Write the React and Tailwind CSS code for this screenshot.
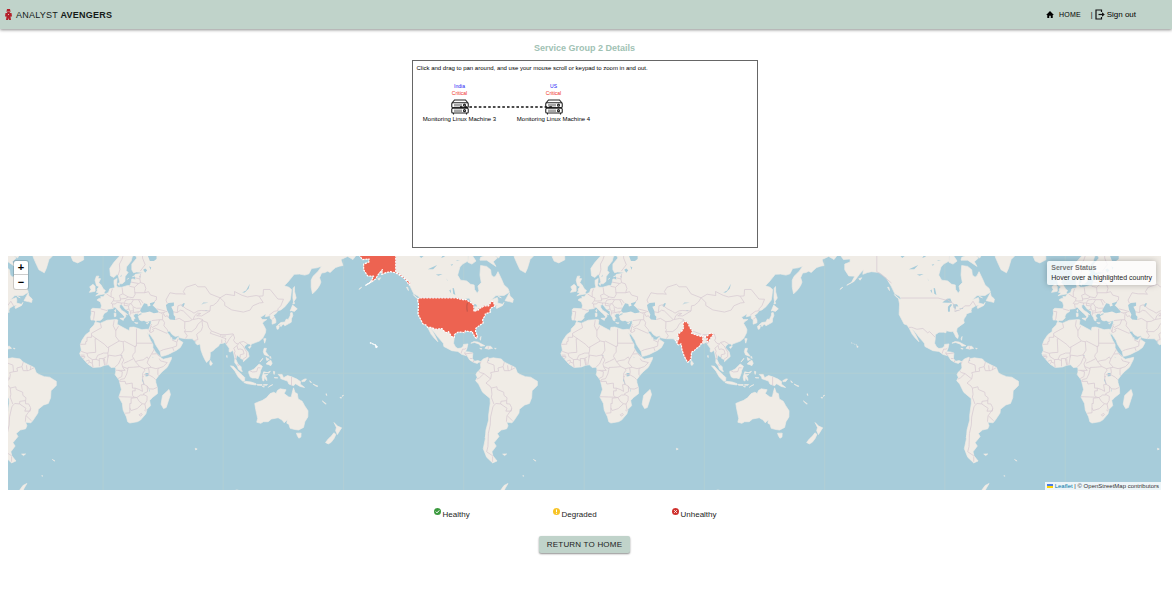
import React from "react";

const WORLD = 1442;
const DEG = WORLD / 360;

// Web Mercator projection of "lon,lat lon,lat ..." lists to an SVG path.
function toPath(list, close) {
  const points = list
    .trim()
    .split(/\s+/)
    .map((pair) => {
      const [lon, lat] = pair.split(",").map(Number);
      const x = 312 + lon * DEG;
      const y =
        370 -
        (WORLD / (2 * Math.PI)) *
          Math.log(Math.tan(Math.PI / 4 + (lat * Math.PI) / 360));
      return `${x.toFixed(1)} ${y.toFixed(1)}`;
    });
  return `M${points.join("L")}${close ? "Z" : ""}`;
}

const areas = (lists) => lists.map((l) => toPath(l, true)).join("");
const lines = (lists) => lists.map((l) => toPath(l, false)).join("");

const OLD_WORLD = [
  "14,68 180,68.5 190,66.2 187,64.5 183,65.5 178,64.5 179.5,62.5 177,62.3 174,61.8 172,61 170,60 168,60.5 166,60 163.5,59.8 162,58 163,56.2 162,54.8 160,53 158.3,52 156.7,51 155.7,54 155.7,57 157,58.5 161,60.5 163.5,62.3 160,61.7 156,61.5 154,59.5 151,59 147,59.4 143,59.3 138,56 135.5,54.7 139,54 141,53 140.5,50 140,48 136,44.5 133,42.8 130.7,42.3 129.7,41 127.5,39.8 129.3,37 129.3,35.3 126.5,34.5 126.5,37.2 125,38 125,39.6 121.3,38.9 122,40.7 119,39.2 117.7,38.8 119,37.3 122.5,37.3 120,36 119.3,35 121,32.5 121.8,31 121.5,29 119.5,25.5 117,23.5 114,22.4 111,21.4 110.5,20.3 109.8,21.5 108,21.6 106,20 105.7,18.8 108.5,15.8 109.3,12.5 107,10.5 105,8.7 105,10.2 103,11 102,12.5 101,12.7 100.6,13.5 100,13 99.3,10.5 100.2,8.5 101,6.8 103.3,5 103.4,3 104.2,1.4 103.3,1.5 101.3,3 100.4,5.5 98.5,8 98.6,11 97.7,15 97,17 95.4,15.8 94.3,16 94.4,18.5 92.3,21 91.5,22.7 90,22 88,21.7 87,21.3 86.5,20 84,18.3 82.3,16.7 80.2,15.5 80.2,13 79.8,10.3 78.2,8.8 77.5,8.1 76.3,10 74.8,13 73.3,17 72.8,20 72.5,21.5 70.5,20.8 69,22.3 70,23 68,23.8 66.8,25 61.5,25.1 57.3,25.7 56.5,27 54,26.6 51.5,28 50,30 48,30 48,29.3 50,27 50.7,25 51.3,26 51.6,25 51.5,24.3 54,24.2 56.3,26.2 56.6,24.4 59.8,22.5 57.8,19 55,17 52,15.6 48.7,14 45,12.8 43.4,12.7 42.7,16 39.2,21 38,24 35,28 34.9,29.5 34.3,27.8 32.6,29.9 32.3,31.2 34.3,31.3 35,33 35.9,35 36,36.8 34,36.3 32.5,36 30.6,36.8 29,36.5 27.3,37 26.3,39.3 29,40.4 29,41.1 28,41 26.2,40.2 26,40.8 24,40.7 23.5,40.2 22.7,40.4 23,39 24,38 23,37.8 23,36.5 21.7,36.9 21.2,38.3 19.4,40.5 19.5,42 16.5,43.3 14.5,45.2 13.5,45.7 12.3,45.3 12.5,44 14,42.5 16,41.7 18.4,40.1 17,40.5 17,39 15.7,37.9 16,39 14.3,40.6 12.3,41.8 10.3,43.3 8.8,44.4 7.3,43.6 5,43.3 3.2,43.2 3.2,41.9 0.8,40.8 -0.3,39.3 0,38.6 -0.8,37.6 -2.2,36.7 -4.5,36.7 -5.5,36 -6.5,37 -9,37 -9.3,38.7 -8.8,41 -9,43 -7.8,43.7 -1.8,43.4 -1.2,45 -2,47 -4.6,48 -3,48.8 -1.5,48.7 -1.8,49.7 0.2,49.6 1.7,51 4,51.6 5,53.3 8,53.7 8.8,54 8.2,55.5 8.2,57 10.5,57.7 10.3,56.5 10,54.8 11,54 14,54 18.5,54.8 20,54.7 21,56 21.5,57.5 22.7,57.5 24,57.1 24.3,58 23.5,58.7 24,59.3 28,59.6 30,60 25,60.2 22.8,59.9 21.5,61 21.5,63 25.3,65 24,65.9 22,65.6 21,64 17.5,62 17.3,60.7 18.7,60 16.5,58.5 16.3,56.5 14.3,55.5 12.8,55.5 11.3,58.9 10.5,59.3 8,58.1 5.5,58.8 5,61.5 8,63.5 12,65.5",
  "-5.9,35.8 -2,35.1 3,36.9 10,37.3 11,37 10.5,34.5 15,32.4 19.5,30.4 20,32.5 23,32.7 29,31 32.3,31.3 32.6,29.9 35.5,24 37.3,21 37.3,18.7 39.5,15.3 43.2,12 43.3,11.5 45,10.5 51.2,11.9 51,10.4 48,4.5 44,1 41.5,-1.8 39.3,-4.8 39.5,-7 40.6,-10.8 40.7,-15 37,-17.7 34.8,-20 35.5,-23.5 32.8,-26 32,-29 28,-33 25.7,-34 20,-34.8 18.4,-34 17.5,-31 15,-26.5 14.4,-22 11.8,-17.5 13.7,-12 13,-9 12,-5 9,-1 9.5,1 9.5,4 8.5,4.6 6,4.3 4,6.4 1,6 -2,4.8 -7.5,4.4 -11.5,7 -13.3,9 -15,11 -16.8,13 -17.5,14.7 -16.3,17 -17,21 -15.8,24 -13,27.8 -9.8,29.8 -9.7,31.5 -6.8,34",
  "113.5,-22 114.2,-26 115.7,-32 115,-34.3 118,-35 120,-34 123.5,-34 126,-32.3 131,-31.5 134,-33 135.5,-34.7 137.8,-32.8 137.5,-35 139,-35.5 140,-38 143.5,-38.7 146.3,-39 150,-37.5 151,-34 153.2,-31 153.3,-27 150.8,-23.5 149,-20.5 146,-18.8 145.3,-15 143.7,-14.3 142.5,-10.8 141.6,-14 140.8,-17.5 139,-17.5 135.5,-15 136.9,-12.2 132.5,-11.5 130.5,-12.7 129.5,-15 127.8,-14 125,-15 122.3,-18 119,-20 116.5,-20.8",
  "144.7,-40.8 148.2,-40.8 148,-43 146.5,-43.6 145.4,-42.3",
  "172.8,-34.5 175.4,-36.7 178.5,-37.7 177,-39.5 175.3,-41.6 174,-39.4 174.6,-37.5",
  "172.7,-40.6 174.2,-41.5 172.8,-43.8 170.7,-45.8 168.5,-46.6 166.5,-45.9 168.5,-44 171,-42.3",
  "131,-0.8 134,-0.8 135,-3.3 138,-1.7 141,-2.6 145,-4.3 147.8,-6.2 147.5,-8 150.8,-10.5 147.5,-9.8 144,-7.7 142.6,-9.2 139,-8 138,-5.8 133,-4 132.8,-2.7",
  "148.5,-5.6 151,-4.2 152.2,-4.2 151,-6 149,-6.3",
  "154.6,-5.5 156,-6.8 155,-6.6", "157,-8 160.8,-9.6 159.6,-9.7", "164,-20.2 167,-22.2 166.3,-22.3", "177.3,-17.6 178.6,-18 177.5,-18.2", "178.7,-16.8 180,-16.2 179.5,-16.8", "167,-15 167.5,-16.4 166.8,-15.8",
  "109,1.5 110,1.7 113,3.2 116.8,7 119.2,5.2 117.8,2 117.5,0 116,-4 114,-3.5 111.7,-3.5 110.2,-2.8 109,0.2",
  "95.3,5.6 97.5,5.2 100.5,2 103.8,-1 106,-3.2 105.8,-5.9 104.3,-5.8 101,-2.6 98.7,1.6",
  "105.3,-6.8 106.5,-6 110.8,-6.5 114.4,-7.7 114.3,-8.7 108,-7.8",
  "115,-8.2 116.7,-8.3 119,-8.3 118.8,-9 115.5,-8.9", "120,-8.4 123,-8.3 122.5,-8.9 120,-8.9", "124,-10 127,-8.4 125,-9.3 123.6,-10.4", "119,-9.5 120.8,-10 120,-10.2",
  "119.5,-5.5 120.4,-5.6 120.5,-3 121.7,-4.7 122.6,-5.4 122.3,-3.3 121.4,-1.9 123.3,-0.9 120.2,-0.9 120.3,0.4 123,0.6 125.2,1.6 124,0.2 120.2,1.2 119,-2.8",
  "127.5,1.5 128.5,1.2 128,-0.8 127.6,0.2", "128,-3.1 130.8,-3.4 128.5,-3.5",
  "120.5,18.4 122.2,18.4 121.6,15.9 124,13 123.8,12.7 120.7,13.8 119.9,16", "125.4,12.4 125.6,11 124.4,12.3", "122,11.8 123.2,11 123.5,10 122.5,9.5", "123.9,11 124,9.8", "122,7 123.5,8.6 125.5,9.8 126.5,7.5 125.5,5.7 124,6.5",
  "117.3,8.4 119.5,11.2 119,10.2", "120.2,25.1 121.9,25.1 120.9,22", "108.7,19.4 110.8,20 109.6,18.3",
  "129.7,33.2 131,33.9 131.9,33 131.2,31.4 130.2,31.3", "132.2,33.6 134.3,34.3 133.3,33",
  "130.9,34 133,35.5 136,35.8 137,37.5 138.6,37.4 140,39.5 140.3,41.2 141.5,41.3 142,39.6 141,37.8 140.8,35.7 138.7,34.7 136,33.5 135,34.4",
  "140,42.2 141.8,45.4 145.3,43.4 143.2,42 141,42.4", "142,46 142.5,47 142,49 142.2,53.5 143.2,54.3 143.3,52 144.5,49 142.8,47.3 143.3,46.2",
  "79.8,7.5 80.2,9.6 81.8,7.4 81,6.1 80.1,6.1", "44.5,-16.3 49.3,-12 50.4,-15.6 47.2,-24.8 45.2,-25.5 43.4,-22.5",
  "-5.5,50.1 -3.5,50.4 1.3,51 0.8,51.5 1.7,52.6 0.2,53.2 -1.5,55 -3.2,56 -1.9,57.6 -4,57.7 -3.1,58.6 -5,58.6 -6,57 -5,54.8 -3,54.2 -4.5,53.2 -4.2,52.3 -5.2,51.8 -3,51.4",
  "-6,52.2 -6,54.4 -7.5,55.3 -10,54.2 -9,53 -10.2,51.7", "-22.5,66.4 -24,65.5 -22.5,64 -19,63.4 -14.5,64.4 -14.6,66.2 -20,66",
  "12.5,38 15.5,38.2 15.1,36.8", "8.3,41 9.6,41 9.6,39.2 8.5,39", "8.6,42.5 9.4,43 9.3,41.6", "23.6,35.5 26.2,35.2 24.8,34.9", "32.4,35 34.4,35.6 33.2,34.7",
  "11,55.6 12.5,56 12,54.8", "18.2,57.3 19.2,57.9", "22,58.4 23.2,58.6", "69,-48.8 70.4,-49.2 69.2,-49.6", "94,-67 97,-65.8 100,-65.4 103,-65.7 106,-66.3 110,-66 112,-67", "92.6,13.4 92.9,11.8 92.5,12",
];

const NEW_WORLD = [
  "-166,68.5 -100,68.5 -86,68.5 -87,66.5 -87,64 -91,63 -93,62 -94.7,59 -92.5,57 -88,56.7 -85,55.3 -82.3,55 -82,53 -80,51.3 -78.8,52.5 -79.5,54.5 -77,56 -78,59 -77.5,62.5 -73,62.2 -70,61 -69.5,59 -67.5,58.2 -66,58.8 -64.5,60.3 -61.5,57 -60,55 -57,53.5 -56,51.8 -60,50.2 -66,50.2 -69.5,48 -65,49.2 -64.5,48 -64.8,46.5 -61,45.8 -60,46.8 -61,45.2 -65.5,43.6 -66,44.5 -64.5,45.5 -67,45 -70,43.7 -70.7,42 -70,41.7 -74,40.6 -74.2,39.5 -75.5,38 -76,37 -75.6,35.2 -78,33.9 -81,32 -81.3,30 -80,27 -80.4,25.2 -81.7,26 -82.8,28 -84,30 -85.3,29.7 -89,30.3 -89.3,29 -91,29.4 -94.5,29.4 -97.2,27.8 -97.3,25 -97.8,22 -96.3,19.3 -94.5,18.2 -92,18.6 -90.5,19.8 -90.3,21.1 -87,21.5 -87.7,18.5 -88.8,16 -86,15.8 -83.3,15 -83.7,11 -82,9 -79.5,9.5 -77.4,8.7 -77.6,7.6 -78.5,8.6 -80,7.4 -82.8,8.2 -85.7,10 -87.6,13 -91.5,14 -94.5,16.2 -99,16.7 -105,19.7 -105.4,22 -109.3,26 -112.8,30 -114.8,31.7 -113,29.3 -111,26 -109.5,23 -112.2,25.5 -114.5,28 -116.7,31.8 -118.4,34 -120.6,34.6 -124.3,40.3 -124,46 -124.7,48.4 -122.7,48.5 -124,49.8 -127.5,51 -130.3,54.5 -134,58 -139,60 -145,60.3 -148,60 -151.5,59.3 -151,61.1 -154,59.3 -158,56.5 -163.5,54.9 -160,56 -157.5,58.6 -162,58.7 -165,61 -165,63 -161,63.7 -161,64.7 -166,64.5 -168,65.7 -163,66.3",
  "-77.4,8.7 -75.5,10.7 -72,12 -71.5,10.9 -68,11.5 -62,10.7 -60,8.5 -55,6 -51.5,4.3 -50,0.5 -48,-0.8 -44,-2.5 -40,-2.9 -37,-4.8 -35,-6 -35,-9 -39,-13 -39.3,-18 -41,-22 -44.5,-23 -48.5,-26 -48.8,-28.5 -52.3,-33 -54,-34.7 -58,-34.3 -57,-36.5 -58,-38.3 -62,-39 -65,-41 -63.7,-42.7 -67.5,-46 -65.8,-47.7 -69,-50.5 -68.3,-52.4 -65.2,-54.7 -68.5,-55.5 -73,-53 -75.5,-49 -74,-44 -73.5,-39 -71.5,-33 -71.5,-30 -70.3,-22 -70.4,-18.5 -76,-14 -79,-8 -81.2,-5.5 -80,-3 -81,-1 -80,1 -78.8,1.8 -77.3,4 -77.6,7.4",
  "-54,67.5 -52,65 -50,63 -48,61 -44,59.9 -42.5,61.5 -40.5,64.5 -37,66 -33,67.5",
  "-74,67.5 -72.5,66 -77.5,65.2 -78,64.3 -73,64.3 -66,62.2 -68,63.8 -65,65 -68,66.2 -64,65 -61.5,66.7 -64,67.8", "-86.5,65.8 -84,66 -81,64 -84,63 -87,63.6",
  "-59.2,47.7 -56,51.5 -55.5,50 -53,48.5 -53.5,46.8 -56,47.2", "-64.3,49.8 -62,49.1", "-128,50.7 -124,48.5 -125.5,49", "-133,54 -131.5,52.5 -132,54",
  "-84.8,22 -82.5,23.1 -79.5,22.8 -74.3,20.2 -77.5,19.9 -78.5,21.3 -82,22.5", "-74.3,18.4 -73,19.9 -70,19.8 -68.5,18.4 -71.5,17.8", "-78.2,18.4 -76.4,18.1 -77.2,17.8", "-67.1,18.4 -65.8,18.3 -66.5,18", "-78,25 -77.2,26.6 -77.6,24",
  "-61,-51.6 -58,-51.5 -59.5,-52.3", "-38,-54 -36,-54.7 -37,-54.5",
  "-64,-67 -62.5,-65.5 -60,-64 -57,-63.3 -59,-64.8 -61.5,-66.8", "-46,-60.6 -45,-60.7", "-154.5,57.6 -152.3,58 -153.5,57", "-168.5,53 -166.5,54 -168,53.5", "-73.5,-42 -74.2,-43.4 -73.6,-43.2",
];

const HAWAII = ["-155.9,20.2 -154.9,19.5 -155.7,19", "-158.2,21.6 -157.8,21.3", "-160,22.2 -159.4,22", "-156.7,21 -156.1,20.7"];

const WATERS = [
  "28,42 27.7,42.6 28.7,44 30.7,46.3 33,46 33.5,44.6 35.5,45 35,46.3 37,46.8 39,47.2 38,46 37,45.3 39,44 41.5,42 41.3,41.3 38,41 35,42 31.5,41.3 29,41.2",
  "47,45.5 49,46.5 53,46.8 53,45 51,44.5 52.7,42 52.8,40 54,39 53.8,37 50,37.4 48.9,38.5 49.5,40.3 47.8,42.7",
  "58.5,45 60,46.3 61.2,46.3 60,44.2", "73.5,45.5 75,46.7 79,46.6 75,46.2", "104,51.6 107,52.5 109.8,55.5 109,53.5 106,51.6", "31.7,0.3 34,0.3 34,-2 31.8,-2.4",
  "29.3,-3.5 31,-8.5 30.3,-8 29,-5", "34,-9.7 35,-14 34.4,-13", "33,67.5 32.5,66.8 35,64 38,64 40,64.7 40,66 44,66 44,67.5", "30,61 31.5,61.5 33,60.8 31.5,59.9", "34.5,62.3 36,61.8 35.5,61", "27,58.8 28,58.6 27.7,57.9",
  "12.8,58.5 14,59.2 13.5,58.4", "28,61.8 29,61.5", "71,67.5 72,66.3 74,66.3 73,67.5", "76,42.6 78.3,42.7 77,42.2", "12.8,13.5 14.5,13.6 14,12.7", "37,12.3 37.7,12 37.2,11.6",
  "-92,46.7 -88.5,48.6 -86,48.7 -84.7,46.6 -88,46.6", "-87.8,42.5 -87.8,44.5 -86,45.9 -84.5,45.7 -86.3,44 -86.3,42 -87.4,41.7", "-84,45.9 -81,45.9 -80,44.7 -81.6,44.8 -82,43.2 -83.5,44", "-83.3,41.7 -79,42.7 -81,42.6", "-79.5,43.5 -76.4,44 -76.5,43.5 -79,43.3",
  "-98.5,53.7 -98,51 -96.4,50.5 -97.5,53.6", "-101,52.5 -99.5,51.2 -100,53", "-111,59.2 -106,59.4 -109,58.8", "-117,61.2 -110,62.7 -113,61.2", "-103,57.8 -102,56.4 -102.6,57", "-125,66.5 -119,66 -122,65", "-100,62.8 -98,63 -99,62.4", "-96,64.2 -93,64.3 -95,64", "-107,65 -104,65.5 -106,65.7", "-75.5,60 -74,60.2", "-72.5,57 -71,56.3", "-75,50.8 -73,51", "-65,54.2 -63.5,54", "-89.3,50 -88,49.6", "-112.8,41.4 -112,40.8", "-71.9,10.7 -71,9.2 -72,9.3", "-85.8,12.1 -84.9,11.2", "-62.8,-30.6 -62.3,-31",
];

const BORDERS = [
  // Africa
  "-2,35 -1.2,32.3 -8.7,28.7 -8.7,27.4 -4.8,25 1.2,21.1 3.2,19 4.2,19.3 12,23.5 9.5,26.5 9.5,30.3 7.6,33.5 8.3,36.9", "-4.8,25 -6,25 -5.5,15.5 -10,15.2 -12,14.8 -16.4,16.2", "-8.7,27.4 -8.7,26 -12,26 -12,23.3 -13,23 -13,21.3 -17,21.2",
  "9.5,30.3 11.5,33.2", "12,23.5 15,23 16,23.4 24,19.5 24,20 25,20 25,31.7", "25,22 37,22", "24,20 24,15.7 22.5,14 22,12.5 23,11 24.2,8.7 27.4,5", "15,23 15.5,17 13.5,14 14,12.5 15.5,10 14,7 15,4 16.5,2.2 13.2,2.2 9.7,2.3", "4.2,19.3 4,16.5 3.6,15 0.3,15 -2,14.1 -4,13.4 -5.4,10.4 -8,10.2 -11.4,12.4 -12,14.8",
  "3.6,15 3.6,11.7 2.7,6.4", "3.6,11.7 4.1,13.5 9,12.8 13.5,13.7 14,12.5 11.5,7 9,4.8", "1,11 1.6,6.2", "0,11 0.5,9 1.2,6.1", "-5.4,10.4 -2.8,9.6 -2.8,5.2", "2.4,12.2 0,11 -2.9,11 -2.8,9.6", "-8,10.2 -8,7.5 -7.5,4.4", "-13.7,12.6 -16.7,12.4", "-13.7,12.6 -13.7,11.7 -15,11", "-13,9 -10.5,9.9 -10.3,8.4 -11.5,7", "-10.3,8.4 -8.3,7.6", "-16.7,13.5 -13.9,13.5",
  "15.5,7.5 19,9 22.9,11", "14.5,5 18.6,3.5 18.6,4.4 23,4.6 27.4,5 30.8,3.5 34,4.2 36,4.5 39.5,3.5 41.9,4", "24.2,8.7 26.5,9.5 30,10 33,12.2 34,10.6 33,7.8 36,4.5", "34,10.6 36.2,14.2 38.5,18", "36.5,14.3 40,14.5 42.4,12.4", "42,11 43,9.3 48,8 45,5 41.9,4 41,2.8 41,-0.9 41.6,-1.7", "30.8,3.5 31.2,2.2 29.6,0 29.6,-4.4 30.7,-8.3", "34,4.2 34.5,1 34,-1 37.6,-3 39.2,-4.7", "30.5,-1 34,-1", "29,-2.7 30.5,-2.4", "18.6,3.5 17.7,-0.5 16,-4 13,-4.6 12.3,-6 16.5,-6 17,-8 21.8,-7.3 22,-11 24,-11 24,-13 22,-13 22,-16.2 23.4,-17.6 18,-17.4 11.8,-17.2", "11.3,2.2 14.4,1.2 14,-2.4 11.2,-3.9", "24,-11 27,-12 29.5,-13.4 28.7,-8.5 30.7,-8.3 33,-9.5 33.3,-13.5 30.3,-15 30.3,-16 28,-16 25.3,-17.8 23.4,-17.6", "34.5,-11.5 37.5,-11.7 40.4,-10.5", "32.9,-9.4 34.5,-11.5", "30.3,-15.6 33,-17 32.8,-20 31.3,-22.4 29.4,-22.2 27,-20.5 25.3,-17.8", "25.3,-17.8 21,-18.3 21,-22 20,-22 20,-28.3 16.5,-28.6", "20,-25 21,-26.8 25.5,-25.5 29.4,-22.2", "31.3,-22.4 32,-26 32.8,-26.8", "27,-29.6 28.7,-28.7 29.3,-29.6 27.8,-30.5 27,-29.6", "30.8,-26.5 32,-27.2",
  // Europe
  "-8.8,42 -6.3,41.8 -7,38 -7.4,37.2", "-1.8,43.4 3.1,42.4", "7.5,43.8 7,46 6,46.3 7.6,47.6 8.2,49 6,49.5 2.5,51", "6,49.5 6,51.5 7,53.3", "7.6,47.6 9.6,47.5 13,47.6 13,48.5 12.2,50.3 14.8,51 14.2,53.9", "7,46 9,46 10.5,46.8 13.7,46.5 13.7,45.6", "13,48.5 17,48.8 18.8,49.5 14.8,51", "18.8,49.5 22.5,49.1 24,50.8 23.6,52.5 23.5,54 19.8,54.4", "16,46.8 17,48 20.5,48.4 22.8,48.2 21,46.2 18.8,45.9 16,46.5 13.7,46.5", "22.8,48.2 26.5,48.2 28.2,46 28.2,45.3", "26.5,48.2 28,48.2 30,46.4", "22.5,44.5 25,43.7 28.6,43.8", "22.5,44.5 21,46.2", "22.4,44.3 22.8,42.3 22.9,41.3 26.3,41.8 28,42", "16,46.5 15.8,45.2 19,45 19.3,43.3 17.5,42.9", "19,45 20.3,45.8", "19.3,43.3 20.5,42 20.5,41 22.9,41.3", "20.5,41 20,39.7", "20.5,42.2 22.4,42.3", "23.6,51.5 31,51.5 34,52 35.5,50.4 40,49.6 39.8,48 38.2,47.2", "31,51.5 32,53.5 30.8,55.5 28,56 26.6,55.6 23.5,54", "21,56.2 26.6,55.6", "24.3,57.9 27.5,57.5 28,56", "27.5,57.5 28,59.4", "27.8,60.5 31.5,62.8 29.5,65 29.5,68", "11.3,59 12.5,61 12.2,63 14,64.5 15.5,66.3 17,68", "24,65.9 23.8,67.5",
  // Asia
  "26.3,41.8 26.2,40.9", "41.5,41.5 43.5,41.1 45,40 44.5,39.7 44.6,37.2 42.3,37.2 36.5,36.7", "40,43.4 44,42.7 48,41.8", "43.5,41.1 46.5,41.5", "45,41 46.5,39 48,39.6 48.9,38.4", "44.6,37.2 46,35.5 45.5,33.5 48,31 48.5,30", "42.3,37.2 41,34.3 36.7,32.4 35.7,33.5 36.5,34.5", "39,32 46.5,29.1 48,28.6", "39,32 37,31.3 38,30.3 36,29.2 35,29.4", "35.5,33 35.4,31 34.9,29.5", "34.3,31.2 34.9,29.5", "42.8,16.4 45,17.4 52,19 55,20 55.2,22.7 51.6,24.2", "52,19 53,16.6", "55.2,22.7 56.2,25", "54,37.3 57,38 61.2,36 61,31.5 61.7,31 60.9,29.8 63,27 61.6,25.2", "60.9,29.8 66.3,29.8 69.5,32 71,34.5 74.5,37 75,36.7", "61.2,36 64.5,36.3 67,37.3 70,37.7 71.5,38 74.7,37.3", "52.5,41.8 55.5,41.3 58,42.7 60.1,42.2 66.5,37.3", "55.5,41.3 56,45 58.5,45.6 62,43.5 66,42 68,41 71,42.3 73.5,42.5 80,42.2", "67.5,37.5 68.5,39.5 70.7,41 73,40.8 70,39.5 73.8,39.4 80,42.2 80.3,45 82.5,45.3 85.5,47 87.5,49.1",
  "48,46.3 47,48 50,51.5 54.5,51 59,51 61.5,50.8 60,52 62,54 69,55.3 71,54.2 76.5,54.2 80,51 87.5,49.1 92,50.8 98.5,50.2 98.3,52.1 104,50.3 108,49.5 114.5,50.2 116.7,49.9 119.7,50 120,53 125,53 130.8,48.5 135,48.4 133,45 131,43.5 130.7,42.4", "87.5,49.1 91,46.8 91,45.2 96.3,42.8 105,41.6 110,42.7 112,45 117,46.5 119.8,46.7 116.7,49.9", "130.7,42.4 128,42 124.3,39.9", "126.7,37.7 128.4,38.6",
  "68.2,23.7 71,24.5 70,28 73.5,30.5 74.5,33 74,36.8 78,35.5 79,32.5 81,30.2 88.2,27.8 92,27.8 97.3,28.3 98.5,25.5 97.6,24 99.2,22 101.2,21.3 102,22.5 105,23.2 108,21.6", "81,30 80.2,28.7 88,26.4 88.2,27.8", "88.8,24.5 88.8,21.9", "88.2,26.2 92,25.1 91.3,23.7 92.5,21.5", "92,26.9 89,26.8", "92.5,21.8 94.5,25 97.3,28", "101.2,21.3 100,20.2 97.8,18.5 98.8,16.2 98.3,15 99.4,12 98.8,10.3", "100.2,20.2 101,17.5 102.5,18 104.7,17.3 105.5,14.5 102.5,13.7 102.8,11.8", "102.2,22.4 104.8,20 107.5,15.5 107.4,12.3 104.5,10.4", "100.2,6.5 101.8,5.8", "109.7,2 111.8,1 115,1.3 115.8,4.2 117.8,4.1", "141,-2.6 141,-9",
  // Americas
  "-141,69 -141,60.3 -137,59 -130,55.8", "-122.8,49 -95.2,49 -89.5,48 -88.4,48.3 -84.5,46.5 -82.5,45.3 -82.5,42 -79,42.8 -76.5,44.1 -75,45 -71.5,45 -69,47.4 -67,45", "-117.1,32.5 -114.8,32.5 -111,31.3 -106.5,31.8 -103,29 -101.5,29.8 -97.3,26", "-92.2,14.6 -91,17.8 -89.2,17.8 -88.3,18.5", "-89.2,15.8 -89.3,14.4 -87.6,13", "-89.3,14.4 -83.3,15", "-85.6,11.1 -83.7,11", "-82.8,9.6 -82.9,8.2", "-77.3,8.6 -77.8,7.2", "-71.8,18 -71.7,19.7",
  "-71.3,11.8 -72.5,8 -67.5,6.2 -67,1.2 -70,0.5 -69.4,-1 -70,-4.2 -75,-0.2 -77.5,0.5 -78.8,1.4", "-67,1.2 -64,1.6 -64.5,4 -60.7,5 -59.8,8.3", "-60.7,5 -59.8,2 -56,2 -51.6,4.2", "-57.3,6 -57,3 -56.5,2", "-54,5.8 -54.5,2.4", "-75,-0.2 -78.3,-3.3 -80.3,-4.3", "-70,-4.2 -73.5,-7.3 -70.5,-9.5 -69.5,-11 -65.3,-10 -65,-12 -60.2,-14 -60,-16.3 -57.7,-18 -58,-20 -58,-22.2 -55.7,-22.3 -54.3,-24.8 -54.6,-27.2 -58.6,-27.2 -57.7,-25.3 -62.5,-22.3 -66,-22 -68.2,-24 -70,-31 -70.3,-36 -71.7,-41 -72,-48 -73,-50.5 -68.4,-52.4", "-69.5,-11 -69,-15.5 -69.5,-17.6 -67.5,-22.5", "-62.5,-22.3 -62.3,-20.5 -58,-20", "-54,-25.6 -55.8,-27.9 -57.8,-30.3 -58.2,-34", "-57.6,-30.2 -53.5,-33.5", "-68.5,-52.7 -68.5,-55",
];

const USA = [
  "-124.7,48.4 -123,49 -95.2,49 -94.6,48.7 -89.5,48 -88.4,48.3 -84.5,46.5 -82.5,45.3 -82.5,42 -79,42.8 -79,43.4 -76.5,44.1 -75,45 -71.5,45 -70,46.7 -69,47.4 -67.8,47 -67,44.8 -70,43.7 -70.7,42 -70,41.7 -74,40.6 -74.2,39.5 -75.5,38 -76,37 -75.6,35.2 -78,33.9 -81,32 -81.3,30 -80,27 -80.4,25.2 -81.7,26 -82.8,28 -84,30 -85.3,29.7 -89,30.3 -89.3,29 -91,29.4 -94.5,29.4 -97.2,27.8 -97.2,26 -99.2,26.5 -101.5,29.8 -103,29 -104.7,30 -106.5,31.8 -111,31.3 -114.8,32.5 -117.1,32.5 -118.4,34 -120.6,34.6 -124.3,40.3 -124,46",
  "-166,68.5 -141,68.5 -141,60.3 -137,59 -133.5,57.5 -130,55.8 -131,55 -134,57.4 -137,58.6 -141,59.9 -145,60.3 -148,60 -151.5,59.3 -151,61.1 -154,59.3 -156,57.5 -163.5,54.9 -160,56 -157.5,58.6 -162,58.7 -165,61 -165,63 -161,63.7 -161,64.7 -166,64.5 -168,65.7 -163,66.3",
];

const INDIA = [
  "73.8,34.8 74.8,36.3 77.5,35.5 79,32.5 81,30.2 80.3,28.8 84,27.4 88.1,26.5 88.1,27.8 89,27 88.5,26 88.8,24.5 88.8,21.9 87,21.3 86.5,20 84,18.3 82.3,16.7 80.2,15.5 80.2,13 79.8,10.3 78.2,8.8 77.5,8.1 76.3,10 74.8,13 73.3,17 72.8,20 72.5,21.5 70.5,20.8 69,22.3 70,23 68.3,23.8 71,24.5 70,28 73.5,30.5 74.5,32.5",
  "89.8,26.3 92,26.9 94,28.8 97.2,28.2 95,26 93.3,23.2 92.5,23 91.5,23.5 92.2,25",
];

const LAND_PATH = areas(OLD_WORLD) + areas(NEW_WORLD);
const HAWAII_PATH = areas(HAWAII);
const WATER_PATH = areas(WATERS);
const BORDER_PATH = lines(BORDERS);
const USA_PATH = areas(USA);
const INDIA_PATH = areas(INDIA);

function WorldMap() {
  return (
    <svg
      role="img"
      aria-label="World map of server locations"
      className="block h-full w-full"
      viewBox="27 18 3456 702"
      preserveAspectRatio="xMidYMid slice"
    >
      <defs>
        <g id="world">
          <path d="M312 18V720M672 18V720M1033 18V720M1393 18V720" stroke="#b1cfd5" strokeWidth="3" />
          <path d={LAND_PATH + HAWAII_PATH} fill="#f0ece6" stroke="#f0ece6" strokeWidth="2" strokeLinejoin="round" />
          <path d={WATER_PATH} fill="#a7ccda" />
          <path d={BORDER_PATH} fill="none" stroke="#d8cbd3" strokeWidth="2.4" strokeLinejoin="round" />
        </g>
      </defs>
      <rect x="-3000" y="-1000" width="9600" height="2700" fill="#a7ccda" />
      <path d="M-3000 370H6600" stroke="#b1cfd5" strokeWidth="3" />
      {[-1, 0, 1, 2].map((copy) => (
        <use key={copy} href="#world" x={copy * WORLD} />
      ))}
      <g transform={`translate(${WORLD} 0)`}>
        <path d={HAWAII_PATH} fill="#fff" stroke="#fff" strokeWidth="4" strokeLinejoin="round" />
        <g fill="#ed6351" stroke="#fff" strokeWidth="3.5" strokeDasharray="6 3" strokeLinejoin="round">
          <path d={USA_PATH} />
          <path d={INDIA_PATH} />
        </g>
        <path d="M-37 159Q-42 166 -38 185" fill="none" stroke="#c9584c" strokeWidth="4" />
      </g>
    </svg>
  );
}

function ServerIcon() {
  return (
    <svg viewBox="0 0 36 32" className="h-4 w-[18px]" fill="none" stroke="#222" strokeWidth="2.2" aria-hidden="true">
      <path d="M2 8L7 2H29L34 8" />
      <rect x="1.5" y="7.5" width="33" height="9.5" rx="2" />
      <rect x="1.5" y="18.5" width="33" height="9.5" rx="2" />
      <path d="M8 10V15M12 10V15M16 10V15M20 10V15M8 21V26M12 21V26M16 21V26M20 21V26" strokeWidth="1.6" />
      <circle cx="27" cy="12.3" r="2" />
      <circle cx="27" cy="23.3" r="2" />
      <path d="M5 28V31M31 28V31" />
    </svg>
  );
}

function MachineNode({ region, name, place }) {
  return (
    <div className={`absolute top-[22px] flex w-20 flex-col items-center text-[5px] leading-[7px] ${place}`}>
      <span className="text-[#2020f5]">{region}</span>
      <span className="text-[#f03028]">Critical</span>
      <div className="mt-0.5">
        <ServerIcon />
      </div>
      <span className="text-[6px] leading-[8px] whitespace-nowrap text-black">{name}</span>
    </div>
  );
}

function StatusItem({ label, color, children }) {
  return (
    <li className="flex items-start gap-0.5">
      <svg viewBox="0 0 14 14" className="size-[7px]" fill="none" stroke="#fff" strokeWidth="2" aria-hidden="true">
        <circle cx="7" cy="7" r="7" fill={color} stroke="none" />
        {children}
      </svg>
      <span className="pt-0.5 leading-[10px]">{label}</span>
    </li>
  );
}

export default function App() {
  return (
    <div className="min-h-screen bg-white font-['Liberation_Sans',Arial,sans-serif] text-[#1c1c1c]">
      <header className="flex h-[29px] items-center justify-between bg-[#c0d3ca] pr-9 pl-[5px] shadow-[0_1px_3px_rgba(0,0,0,0.45)]">
        <a href="#home" className="flex items-center gap-1 text-[9px] leading-3 tracking-wide text-[#151a18]">
          <svg viewBox="0 0 14 22" className="h-[11px] w-[7px]" fill="#b3202a" aria-hidden="true">
            <path d="M4 0H10L11 5L9 8H13L14 15H11L12 22H8L7 18L6 22H2L3 15H0L1 8H5L3 5Z" />
            <path d="M5 4H6.5V5.5H5ZM7.5 4H9V5.5H7.5ZM6 10H8V12H6Z" fill="#e0c4ba" />
          </svg>
          <span>
            ANALYST <strong>AVENGERS</strong>
          </span>
        </a>
        <nav className="flex items-center text-[8px] leading-3 text-black">
          <a href="#home" className="flex items-center gap-[5px] text-[7px] tracking-wide">
            <svg viewBox="0 0 20 18" className="h-[7px] w-2" fill="#000" aria-hidden="true">
              <path d="M10 0L20 10H17V18H12V12H8V18H3V10H0Z" />
            </svg>
            HOME
          </a>
          <span className="ml-2.5 text-[7px]">|</span>
          <button type="button" className="ml-0.5 flex items-center gap-0.5">
            <svg viewBox="0 0 20 22" className="h-[11px] w-[10px]" fill="none" stroke="#111" strokeWidth="2.4" aria-hidden="true">
              <path d="M13 6V2H2V20H13V16" />
              <path d="M7 11H17" />
              <path d="M14 6.5L19.5 11L14 15.5Z" fill="#111" stroke="none" />
            </svg>
            Sign out
          </button>
        </nav>
      </header>

      <main className="flex flex-col items-center pt-[13px] pr-[11px] pl-2">
        <h1 className="text-[9px] leading-3 font-bold text-[#9fc2b4]">Service Group 2 Details</h1>

        <section className="relative mt-1.5 h-[188px] w-[346px] border border-[#666] px-1 py-1">
          <p className="text-[6px] leading-[7px] whitespace-nowrap text-black">
            Click and drag to pan around, and use your mouse scroll or keypad to zoom in and out.
          </p>
          <MachineNode region="India" name="Monitoring Linux Machine 3" place="left-[7px]" />
          <MachineNode region="US" name="Monitoring Linux Machine 4" place="left-[101px]" />
          <svg viewBox="0 0 94 2" className="absolute top-[45px] left-[47px] h-0.5 w-[94px]" aria-hidden="true">
            <path d="M0 1H94" stroke="#111" strokeWidth="1.6" strokeDasharray="2.6 2.1" />
          </svg>
        </section>

        <section className="relative mt-2 h-[234px] w-full overflow-hidden">
          <WorldMap />
          <div className="absolute top-[5px] left-1.5 flex flex-col divide-y divide-[#ccc] rounded-xs bg-white text-[11px] font-bold text-black shadow-[0_0_0_1px_rgba(0,0,0,0.15)]">
            <button type="button" aria-label="Zoom in" className="flex size-3.5 items-center justify-center">
              +
            </button>
            <button type="button" aria-label="Zoom out" className="flex size-3.5 items-center justify-center">
              −
            </button>
          </div>
          <div className="absolute top-[5px] right-[5px] rounded-xs bg-white/80 px-1 py-0.5 text-[7px] leading-[10px] shadow-[0_0_6px_rgba(0,0,0,0.25)]">
            <h2 className="font-bold text-[#777]">Server Status</h2>
            <p>Hover over a highlighted country</p>
          </div>
          <div className="absolute right-0 bottom-0 flex items-center bg-white/80 px-0.5 text-[6px] leading-[8px] text-[#333]">
            <a href="#leaflet" className="flex items-center gap-0.5 text-[#0078a8]">
              <svg viewBox="0 0 12 8" className="h-1 w-1.5" aria-hidden="true">
                <path fill="#4c7be1" d="M0 0H12V4H0Z" />
                <path fill="#ffd500" d="M0 4H12V8H0Z" />
              </svg>
              Leaflet
            </a>
            <span className="whitespace-pre"> | © OpenStreetMap contributors</span>
          </div>
        </section>

        <ul className="mt-[18px] grid grid-cols-[119px_119px_64px] text-[8px]">
          <StatusItem label="Healthy" color="#3c9a3f">
            <path d="M3.5 7.2L6 9.7L10.5 4.8" />
          </StatusItem>
          <StatusItem label="Degraded" color="#f7c325">
            <path d="M7 3V8M7 9.5V11.5" />
          </StatusItem>
          <StatusItem label="Unhealthy" color="#d0312d">
            <path d="M4.5 4.5L9.5 9.5M9.5 4.5L4.5 9.5" />
          </StatusItem>
        </ul>

        <button
          type="button"
          className="mt-4 rounded-xs bg-[#c0d3ca] px-2 py-[3px] text-[8px] leading-[11px] tracking-wide text-[#1c1c1c] shadow-[0_1px_2px_rgba(0,0,0,0.45)]"
        >
          RETURN TO HOME
        </button>
      </main>
    </div>
  );
}
